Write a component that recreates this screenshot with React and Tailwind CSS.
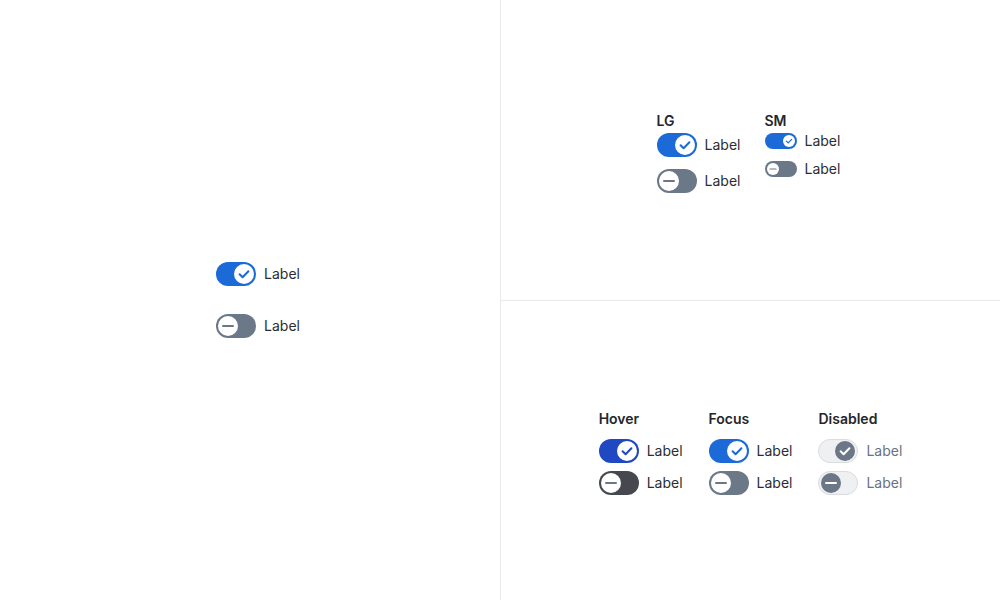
const FONT = { fontFamily: 'Inter, "Noto Sans", sans-serif' };

function Knob({ on, size, disabled, track }) {
  const d = size === 'sm' ? 12 : 20;
  const fill = disabled ? '#6b7686' : '#ffffff';
  const stroke = disabled ? '#ffffff' : on ? track : '#6b7686';
  return (
    <svg width={d} height={d} viewBox="0 0 20 20" className="shrink-0">
      <circle cx="10" cy="10" r="10" fill={fill} />
      {on ? (
        <path d="M5.6 10.2l3 3 5.8-6" fill="none" stroke={stroke} strokeWidth="2" strokeLinecap="round" strokeLinejoin="round" />
      ) : (
        <path d="M5 10h10" fill="none" stroke={stroke} strokeWidth="2" strokeLinecap="round" />
      )}
    </svg>
  );
}

function Toggle({ on, size = 'lg', state = 'default' }) {
  const disabled = state === 'disabled';
  let track = on ? '#1b6ad8' : '#6b7888';
  if (state === 'hover') track = on ? '#1f48c2' : '#45484e';
  const sm = size === 'sm';
  return (
    <div className="flex items-center gap-2">
      <div
        className={`flex items-center rounded-full ${sm ? 'w-8 h-4 px-0.5' : 'w-10 h-6 px-0.5'} ${on ? 'justify-end' : 'justify-start'} ${disabled ? 'border border-[#dadcdf]' : ''}`}
        style={{ backgroundColor: disabled ? '#eff0f1' : track }}
      >
        <Knob on={on} size={size} disabled={disabled} track={track} />
      </div>
      <span className={`text-sm leading-5 ${disabled ? 'text-[#6b7280]' : 'text-[#2b2d31]'}`}>Label</span>
    </div>
  );
}

function Heading({ children }) {
  return <div className="text-sm leading-5 font-semibold text-[#24262a]">{children}</div>;
}

export default function App() {
  return (
    <div className="flex w-[1000px] h-[600px] bg-white" style={FONT}>
      <div className="w-[500px] h-full flex items-center justify-center">
        <div className="flex flex-col gap-7 ml-4">
          <Toggle on />
          <Toggle on={false} />
        </div>
      </div>
      <div className="flex-1 flex flex-col border-l border-[#e8e9eb]">
        <div className="h-[300px] flex items-center justify-center pt-[3px]">
          <div className="flex gap-6 -ml-1">
            <div className="flex flex-col">
              <Heading>LG</Heading>
              <div className="flex flex-col gap-3 mt-0.5">
                <Toggle on />
                <Toggle on={false} />
              </div>
            </div>
            <div className="flex flex-col">
              <Heading>SM</Heading>
              <div className="flex flex-col gap-2 mt-0">
                <Toggle on size="sm" />
                <Toggle on={false} size="sm" />
              </div>
            </div>
          </div>
        </div>
        <div className="flex-1 flex items-center justify-center border-t border-[#e8e9eb] pt-[2px]">
          <div className="flex gap-[26px]">
            {[
              ['Hover', 'hover'],
              ['Focus', 'focus'],
              ['Disabled', 'disabled'],
            ].map(([title, st]) => (
              <div key={st} className="flex flex-col">
                <Heading>{title}</Heading>
                <div className="flex flex-col gap-2 mt-2.5">
                  <Toggle on state={st} />
                  <Toggle on={false} state={st} />
                </div>
              </div>
            ))}
          </div>
        </div>
      </div>
    </div>
  );
}
